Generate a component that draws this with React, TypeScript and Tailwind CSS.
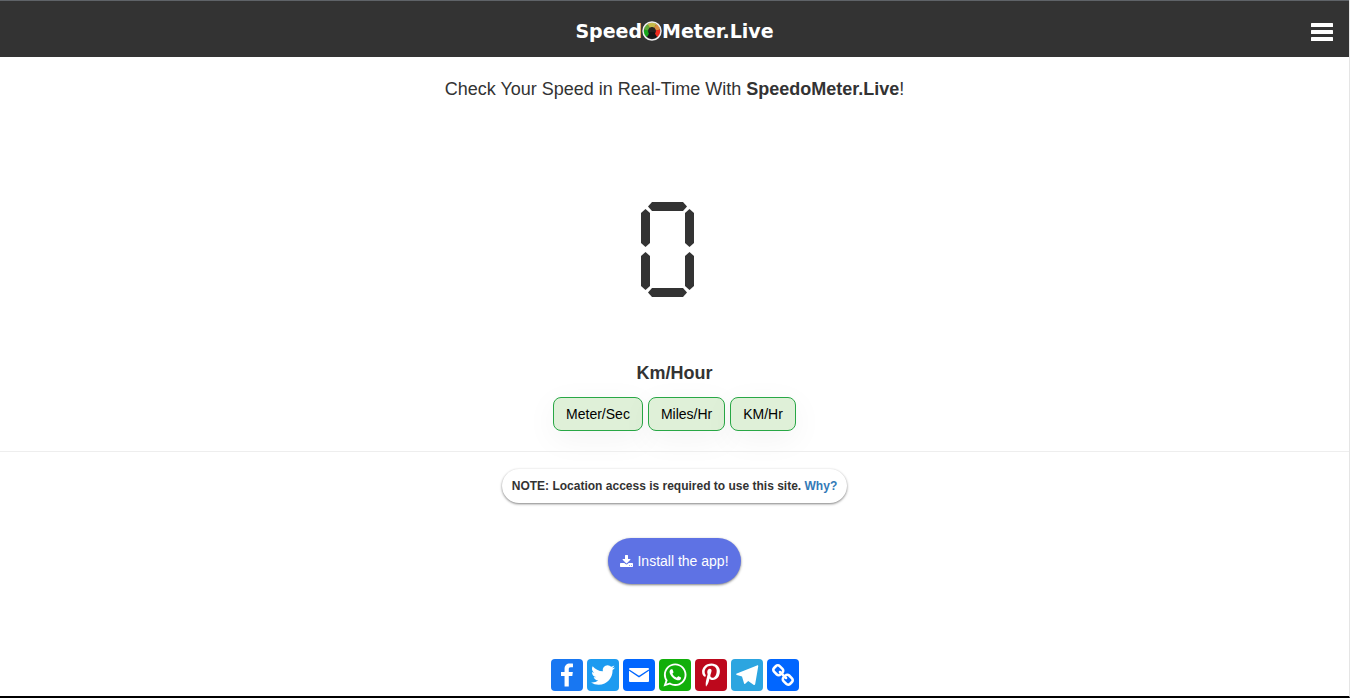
import { clsx } from 'clsx';
import type { ReactNode } from 'react';

const units = ['Meter/Sec', 'Miles/Hr', 'KM/Hr'];

const horizontal =
	'[clip-path:polygon(4px_0,35px_0,100%_50%,35px_100%,4px_100%,0_50%)]';
const vertical =
	'[clip-path:polygon(50%_0,100%_4px,100%_34px,50%_100%,0_34px,0_4px)]';

// a-g, clockwise from the top, with the middle bar last
const segments = [
	{ id: 'a', className: clsx('col-span-3 col-start-2 row-span-2 row-start-1', horizontal) },
	{ id: 'b', className: clsx('col-span-2 col-start-4 row-span-2 row-start-2', vertical) },
	{ id: 'c', className: clsx('col-span-2 col-start-4 row-span-2 row-start-5', vertical) },
	{ id: 'd', className: clsx('col-span-3 col-start-2 row-span-2 row-start-6', horizontal) },
	{ id: 'e', className: clsx('col-span-2 col-start-1 row-span-2 row-start-5', vertical) },
	{ id: 'f', className: clsx('col-span-2 col-start-1 row-span-2 row-start-2', vertical) },
	{ id: 'g', className: clsx('col-span-3 col-start-2 row-start-4', horizontal) }
];

const lit = [
	'abcdef',
	'bc',
	'abdeg',
	'abcdg',
	'bcfg',
	'acdfg',
	'acdefg',
	'abc',
	'abcdefg',
	'abcdfg'
];

const Digit = ({ value }: { value: number }) => (
	<span className="grid grid-cols-[7px_2px_35px_2px_7px] grid-rows-[7px_2px_36px_5px_36px_2px_7px]">
		{segments
			.filter(({ id }) => lit[value].includes(id))
			.map(({ id, className }) => (
				<span key={id} className={clsx('bg-[#333]', className)} />
			))}
	</span>
);

const SpeedDisplay = ({ speed }: { speed: number }) => (
	<output aria-label={`${speed}`} className="flex gap-3 pr-3.5">
		{String(speed)
			.split('')
			.map((digit, index) => (
				<Digit key={index} value={Number(digit)} />
			))}
	</output>
);

const DialIcon = () => (
	<svg viewBox="0 0 20 20" className="size-5" aria-hidden="true">
		<circle cx="10" cy="10" r="9" fill="#222" />
		<g fill="none" strokeWidth="4.6">
			<path d="M5.8 14.6A6.2 6.2 0 0 1 3.8 9" stroke="#17a51c" />
			<path d="M3.8 9A6.2 6.2 0 0 1 6.6 4.8" stroke="#5fa835" />
			<path d="M6.6 4.8A6.2 6.2 0 0 1 13.4 4.8" stroke="#c4b94a" />
			<path d="M13.4 4.8A6.2 6.2 0 0 1 16.2 9" stroke="#d98c42" />
			<path d="M16.2 9A6.2 6.2 0 0 1 14.2 14.6" stroke="#ee2a1c" />
		</g>
		<circle cx="10" cy="9.8" r="3.2" fill="#26221f" />
		<path d="M7.4 11L5.6 16.4H14.4L12.6 11Z" fill="#161616" />
		<circle cx="10" cy="10" r="9" fill="none" stroke="#eee" strokeWidth="1.5" />
	</svg>
);

const MenuIcon = () => (
	<svg viewBox="0 0 22 18" className="h-[18px] w-[22px]" fill="currentColor">
		<rect width="22" height="4" rx="0.5" />
		<rect y="7" width="22" height="4" rx="0.5" />
		<rect y="14" width="22" height="4" rx="0.5" />
	</svg>
);

const DownloadIcon = () => (
	<svg viewBox="0 -128 1664 1536" className="h-3 w-[13px]" fill="currentColor">
		<path d="M1280 1216q0-26-19-45t-45-19-45 19-19 45 19 45 45 19 45-19 19-45zm256 0q0-26-19-45t-45-19-45 19-19 45 19 45 45 19 45-19 19-45zm128-224v320q0 40-28 68t-68 28H96q-40 0-68-28t-28-68V992q0-40 28-68t68-28h465l135 136q58 56 136 56t136-56l136-136h464q40 0 68 28t28 68zm-325-569q17 41-14 70l-448 448q-18 19-45 19t-45-19L339 493q-31-29-14-70 17-39 59-39h256V-64q0-26 19-45t45-19h256q26 0 45 19t19 45v448h256q42 0 59 39z" />
	</svg>
);

type Share = { name: string; color: string; icon: ReactNode };

const shares: Share[] = [
	{
		name: 'Facebook',
		color: 'bg-[#1877f2]',
		icon: (
			<path d="M17.78 27.5V17.008h3.522l.527-4.09h-4.05v-2.61c0-1.182.33-1.99 2.023-1.99h2.166V4.66c-.375-.05-1.66-.16-3.155-.16-3.123 0-5.26 1.905-5.26 5.405v3.016h-3.53v4.09h3.53V27.5h4.223z" />
		)
	},
	{
		name: 'Twitter',
		color: 'bg-[#1d9bf0]',
		icon: (
			<path d="M28 8.557a9.913 9.913 0 0 1-2.828.775 4.93 4.93 0 0 0 2.166-2.725 9.738 9.738 0 0 1-3.13 1.194 4.92 4.92 0 0 0-3.593-1.55 4.924 4.924 0 0 0-4.794 6.049c-4.09-.21-7.72-2.17-10.15-5.15a4.942 4.942 0 0 0-.665 2.477c0 1.71.87 3.214 2.19 4.1a4.968 4.968 0 0 1-2.23-.616v.06c0 2.39 1.7 4.38 3.952 4.83-.414.115-.85.174-1.297.174-.318 0-.626-.03-.928-.086a4.935 4.935 0 0 0 4.6 3.42 9.893 9.893 0 0 1-6.114 2.107c-.398 0-.79-.023-1.175-.068a13.953 13.953 0 0 0 7.55 2.213c9.056 0 14.01-7.507 14.01-14.013 0-.213-.005-.426-.015-.637.96-.695 1.795-1.56 2.455-2.55z" />
		)
	},
	{
		name: 'Email',
		color: 'bg-[#0166ff]',
		icon: (
			<>
				<rect x="6" y="9" width="20" height="14" rx="1" />
				<path d="M6 11L16 17.6L26 11" fill="none" stroke="#0166ff" strokeWidth="1.3" />
			</>
		)
	},
	{
		name: 'WhatsApp',
		color: 'bg-[#12af0a]',
		icon: (
			<path
				fillRule="evenodd"
				d="M16.21 4.41C9.973 4.41 4.917 9.465 4.917 15.7c0 2.134.592 4.13 1.62 5.832L4.5 27.59l6.25-2.002a11.241 11.241 0 0 0 5.46 1.404c6.234 0 11.29-5.055 11.29-11.29 0-6.237-5.056-11.292-11.29-11.292zm0 20.69c-1.91 0-3.69-.57-5.173-1.553l-3.61 1.156 1.173-3.49a9.345 9.345 0 0 1-1.79-5.512c0-5.18 4.217-9.4 9.4-9.4 5.183 0 9.397 4.22 9.397 9.4 0 5.188-4.214 9.4-9.398 9.4zm5.293-6.832c-.284-.155-1.673-.906-1.934-1.012-.265-.106-.455-.16-.658.12s-.78.91-.954 1.096c-.176.186-.345.203-.628.048-.282-.154-1.2-.494-2.264-1.517-.83-.795-1.373-1.76-1.53-2.055-.158-.295 0-.445.15-.584.134-.124.3-.326.45-.488.15-.163.203-.28.306-.47.104-.19.06-.36-.005-.506-.066-.147-.59-1.587-.81-2.173-.218-.586-.46-.498-.63-.505-.168-.007-.358-.038-.55-.045-.19-.007-.51.054-.78.332-.277.274-1.05.943-1.1 2.362-.055 1.418.926 2.826 1.064 3.023.137.2 1.874 3.272 4.76 4.537 2.888 1.264 2.9.878 3.43.85.53-.027 1.734-.633 2-1.297.266-.664.287-1.24.22-1.363-.07-.123-.26-.203-.54-.357z"
			/>
		)
	},
	{
		name: 'Pinterest',
		color: 'bg-[#bd081c]',
		icon: (
			<path d="M16.539 4.5c-6.277 0-9.442 4.5-9.442 8.253 0 2.272.86 4.293 2.705 5.046.303.125.574.005.662-.33.061-.231.205-.816.27-1.06.088-.331.053-.447-.191-.736-.532-.627-.873-1.439-.873-2.591 0-3.338 2.498-6.327 6.505-6.327 3.548 0 5.497 2.168 5.497 5.062 0 3.81-1.686 7.025-4.188 7.025-1.382 0-2.416-1.142-2.085-2.545.397-1.674 1.166-3.48 1.166-4.689 0-1.081-.581-1.983-1.782-1.983-1.413 0-2.548 1.462-2.548 3.419 0 1.247.421 2.091.421 2.091l-1.699 7.199c-.505 2.137-.076 4.755-.039 5.019.021.158.223.196.314.077.13-.17 1.813-2.247 2.384-4.324.162-.587.929-3.631.929-3.631.46.876 1.801 1.646 3.227 1.646 4.247 0 7.128-3.871 7.128-9.053.003-3.918-3.317-7.568-8.361-7.568z" />
		)
	},
	{
		name: 'Telegram',
		color: 'bg-[#2ca5e0]',
		icon: (
			<path d="M26 6.4L5.8 14.6c-.9.4-.9 1 0 1.3l5.2 1.7 2.1 7c.2.5.7.6 1.1.2l3-2.8 5.3 3.7c.9.5 1.5.2 1.7-.8L27.2 7.5c.2-1-.4-1.4-1.2-1.1z" />
		)
	},
	{
		name: 'Copy Link',
		color: 'bg-[#0166ff]',
		icon: (
			<path d="M24.412 21.177c0-.36-.126-.665-.377-.917l-2.804-2.804a1.235 1.235 0 0 0-.913-.378c-.377 0-.7.144-.97.43.026.028.11.11.255.25.144.14.24.236.29.29s.117.14.2.256c.087.117.146.232.177.344.03.112.046.236.046.37 0 .36-.126.666-.377.918a1.25 1.25 0 0 1-.918.377 1.4 1.4 0 0 1-.373-.047 1.062 1.062 0 0 1-.345-.175 2.268 2.268 0 0 1-.256-.2 6.815 6.815 0 0 1-.29-.29c-.14-.142-.223-.23-.25-.254-.297.28-.445.607-.445.984 0 .36.126.664.377.916l2.778 2.79c.243.243.548.364.917.364.36 0 .665-.118.917-.35l1.982-1.97c.252-.25.378-.55.378-.9zm-9.477-9.504c0-.36-.126-.665-.377-.917l-2.777-2.79a1.235 1.235 0 0 0-.913-.378c-.35 0-.656.12-.917.364L7.967 9.92c-.254.252-.38.553-.38.903 0 .36.126.665.38.917l2.802 2.804c.242.243.547.364.916.364.377 0 .7-.14.97-.418-.026-.027-.11-.11-.255-.25s-.24-.235-.29-.29a2.675 2.675 0 0 1-.2-.255 1.052 1.052 0 0 1-.176-.344 1.396 1.396 0 0 1-.047-.37c0-.36.126-.662.377-.914.252-.252.557-.377.917-.377.136 0 .26.015.37.046.114.03.23.09.346.175.117.085.202.153.256.2.054.05.15.148.29.29.14.146.222.23.25.258.294-.278.442-.606.442-.983zM27 21.177c0 1.078-.382 1.99-1.146 2.736l-1.982 1.968c-.745.75-1.658 1.12-2.736 1.12-1.087 0-2.004-.38-2.75-1.143l-2.777-2.79c-.75-.747-1.12-1.66-1.12-2.737 0-1.106.392-2.046 1.183-2.818l-1.186-1.185c-.774.79-1.708 1.186-2.805 1.186-1.078 0-1.995-.376-2.75-1.13l-2.803-2.81C5.377 12.82 5 11.903 5 10.826c0-1.08.382-1.993 1.146-2.738L8.128 6.12C8.873 5.372 9.785 5 10.864 5c1.087 0 2.004.382 2.75 1.146l2.777 2.79c.75.747 1.12 1.66 1.12 2.737 0 1.105-.392 2.045-1.183 2.817l1.186 1.186c.774-.79 1.708-1.186 2.805-1.186 1.078 0 1.995.377 2.75 1.132l2.804 2.804c.754.755 1.13 1.672 1.13 2.75z" />
		)
	}
];

const Header = () => (
	<header className="grid h-[57px] grid-cols-[1fr_auto_1fr] items-center border-t border-[#5f6368] bg-[#333] px-4 pt-1 text-white">
		<a
			href="#"
			className="col-start-2 flex items-center font-['DejaVu_Sans',sans-serif] text-[19px] leading-6 font-bold"
		>
			Speed
			<DialIcon />
			Meter.Live
		</a>
		<button type="button" aria-label="Menu" className="justify-self-end pt-0.5">
			<MenuIcon />
		</button>
	</header>
);

const App = () => (
	<div className="flex min-h-screen flex-col border-r border-b-2 border-r-[#e5e5e5] border-b-black bg-white font-['Liberation_Sans',Arial,sans-serif] text-sm text-[#333]">
		<Header />
		<main className="flex flex-1 flex-col items-center">
			<h1 className="pt-[22px] text-lg leading-5">
				Check Your Speed in Real-Time With <b>SpeedoMeter.Live</b>!
			</h1>
			<div className="pt-[103px] pb-[66px]">
				<SpeedDisplay speed={0} />
			</div>
			<h2 className="text-lg leading-5 font-bold">Km/Hour</h2>
			<div className="flex gap-[5px] pt-3.5 pb-5">
				{units.map((unit) => (
					<button
						key={unit}
						type="button"
						className="rounded-lg border border-[#28a745] bg-[#dff0d8] px-3 py-1.5 leading-5 text-black shadow-[0_8px_32px_rgba(0,0,0,0.05)]"
					>
						{unit}
					</button>
				))}
			</div>
			<hr className="w-full border-[#eee]" />
			<p className="mt-[17px] rounded-full px-2.5 py-2 text-xs leading-[18px] font-bold shadow-[0_1px_3px_rgba(0,0,0,0.3),0_1px_2px_rgba(0,0,0,0.24)]">
				NOTE: Location access is required to use this site.{' '}
				<a href="#" className="text-[#337ab7]">
					Why?
				</a>
			</p>
			<button
				type="button"
				className="mt-[35px] flex items-center gap-1 rounded-full bg-[#5e72e4] px-3 py-[13px] leading-5 text-white shadow-[0_1px_3px_rgba(0,0,0,0.3),0_1px_2px_rgba(0,0,0,0.24)]"
			>
				<DownloadIcon />
				Install the app!
			</button>
			<nav aria-label="Share" className="mt-auto flex gap-1 pb-[5px]">
				{shares.map(({ name, color, icon }) => (
					<a key={name} href="#" aria-label={name} className={clsx('rounded-sm', color)}>
						<svg viewBox="0 0 32 32" className="size-8" fill="#fff">
							{icon}
						</svg>
					</a>
				))}
			</nav>
		</main>
	</div>
);

export default App;
